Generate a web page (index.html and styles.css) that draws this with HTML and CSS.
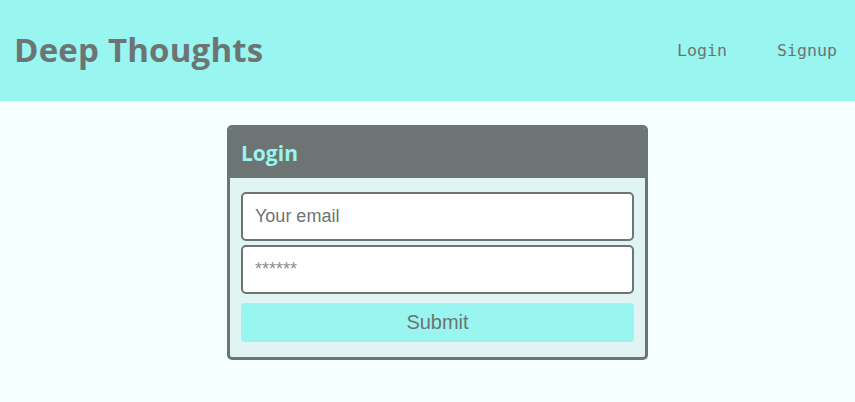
FILE: index.html
```html
<!DOCTYPE html>
<html>
<head>
<meta charset="utf-8">
<link rel="stylesheet" href="styles.css">
</head>
<body>
<header class="site-header">
  <h1 class="brand">Deep Thoughts</h1>
  <nav class="nav">
    <a class="nav-link" href="#">Login</a>
    <a class="nav-link" href="#">Signup</a>
  </nav>
</header>
<main class="main">
  <div class="card">
    <h4 class="card-header">Login</h4>
    <form class="card-body">
      <input class="form-input" type="email" placeholder="Your email">
      <input class="form-input" type="password" placeholder="******">
      <button class="btn" type="button">Submit</button>
    </form>
  </div>
</main>
</body>
</html>
```

FILE: styles.css
```css
* { box-sizing: border-box; }
html, body { margin: 0; padding: 0; }
body {
  background: #f5fffe;
  font-family: "Liberation Sans", Arial, sans-serif;
  color: #6c7474;
  height: 402px;
  overflow: hidden;
}
.site-header {
  background: #98f5f0;
  height: 101px;
  display: flex;
  align-items: center;
  justify-content: space-between;
  padding: 0 18px 0 14px;
}
.brand {
  margin: 0;
  font-family: "Open Sans", "Noto Sans", sans-serif;
  font-weight: 700;
  font-size: 33px;
  letter-spacing: 0.2px;
  color: #6c7474;
  position: relative;
  top: -1px;
}
.nav {
  display: flex;
  gap: 50px;
}
.nav-link {
  font-family: "DejaVu Sans Mono", monospace;
  font-size: 16.6px;
  color: #6c7474;
  text-decoration: none;
}
.main {
  display: flex;
  justify-content: center;
  padding: 24px 0 0 20px;
}
.card {
  width: 421px;
  border: 3px solid #6c7474;
  border-radius: 5px;
  background: #e0f4f3;
  overflow: hidden;
}
.card-header {
  margin: 0;
  background: #6c7474;
  color: #98f5f0;
  font-family: "Open Sans", "Noto Sans", sans-serif;
  font-weight: 700;
  font-size: 21px;
  height: 50px;
  display: flex;
  align-items: center;
  padding: 0 11px 1px;
}
.card-body {
  display: flex;
  flex-direction: column;
  padding: 14px 11px 15px;
  gap: 4px;
  margin: 0;
}
.form-input {
  height: 49px;
  border: 2px solid #6c7474;
  border-radius: 5px;
  background: #fff;
  font-family: "Liberation Sans", Arial, sans-serif;
  font-size: 18px;
  padding: 0 12px;
  color: #6c7474;
}
.form-input::placeholder { color: #6c7474; }
.form-input[type="password"]::placeholder { color: #8a8f8f; }
.btn {
  margin-top: 5px;
  height: 39px;
  border: none;
  border-radius: 4px;
  background: #98f5f0;
  color: #6c7474;
  font-family: "Liberation Sans", Arial, sans-serif;
  font-size: 20px;
}
```
